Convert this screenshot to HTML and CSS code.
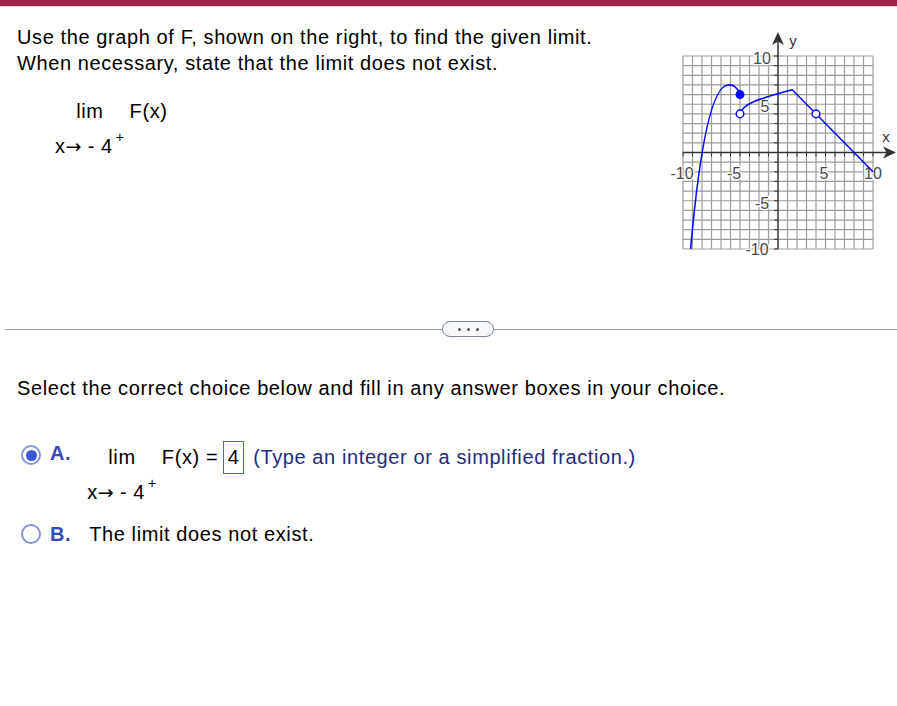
FILE: index.html
```html
<!DOCTYPE html>
<html lang="en">
<head>
    <meta charset="UTF-8">
    <title>Limit from a graph</title>
    <link rel="stylesheet" href="styles.css">
</head>
<body>
    <div class="topbar"></div>

    <div class="question">
        <div class="question-text">
            <p class="line">Use the graph of F, shown on the right, to find the given limit.<br>When necessary, state that the limit does not exist.</p>
            <div class="limit first">
                <div class="stack">
                    <span class="lim">lim</span>
                    <span class="sub">x<span class="to">→</span> - 4<sup>+</sup></span>
                </div>
                <span class="fx">F(x)</span>
            </div>
        </div>

        <svg class="graph" width="230" height="230" viewBox="0 0 230 230">
            <!-- grid -->
            <path class="grid" d="M16 28V221M25.5 28V221M35 28V221M44.5 28V221M54 28V221M63.5 28V221M73 28V221M82.5 28V221M92 28V221M101.5 28V221M120.5 28V221M130 28V221M139.5 28V221M149 28V221M158.5 28V221M168 28V221M177.5 28V221M187 28V221M196.5 28V221M206 28V221
                M16 28H206M16 37.65H206M16 47.3H206M16 56.95H206M16 66.6H206M16 76.25H206M16 85.9H206M16 95.55H206M16 105.2H206M16 114.85H206M16 134.15H206M16 143.8H206M16 153.45H206M16 163.1H206M16 172.75H206M16 182.4H206M16 192.05H206M16 201.7H206M16 211.35H206M16 221H206"/>
            <!-- axes -->
            <path class="axis" d="M111 221V12M16 124.5H221"/>
            <path class="ticks" d="M107 28H111M107 37.65H111M107 47.3H111M107 56.95H111M107 66.6H111M107 76.25H111M107 85.9H111M107 95.55H111M107 105.2H111M107 114.85H111M107 134.15H111M107 143.8H111M107 153.45H111M107 163.1H111M107 172.75H111M107 182.4H111M107 192.05H111M107 201.7H111M107 211.35H111M107 221H111
                M16 124.5V128.5M25.5 124.5V128.5M35 124.5V128.5M44.5 124.5V128.5M54 124.5V128.5M63.5 124.5V128.5M73 124.5V128.5M82.5 124.5V128.5M92 124.5V128.5M101.5 124.5V128.5M120.5 124.5V128.5M130 124.5V128.5M139.5 124.5V128.5M149 124.5V128.5M158.5 124.5V128.5M168 124.5V128.5M177.5 124.5V128.5M187 124.5V128.5M196.5 124.5V128.5M206 124.5V128.5"/>
            <path class="arrow" d="M111 4L117 17L111 13.5L105 17Z"/>
            <path class="arrow" d="M229 124.5L216 118.5L219.5 124.5L216 130.5Z"/>
            <text class="axis-name" x="126" y="12">y</text>
            <text class="axis-name" x="219" y="108">x</text>
            <!-- tick labels -->
            <text class="tick-label" x="95" y="30">10</text>
            <text class="tick-label" x="98" y="78">5</text>
            <text class="tick-label" x="95" y="175">-5</text>
            <text class="tick-label" x="90" y="221">-10</text>
            <text class="tick-label" x="15" y="145">-10</text>
            <text class="tick-label" x="67" y="145">-5</text>
            <text class="tick-label" x="157" y="145">5</text>
            <text class="tick-label" x="206" y="145">10</text>
            <!-- F -->
            <path class="curve" d="M23.6 221C33 115 45 58 61 57C66 56 71 60 73 66.6"/>
            <path class="curve" d="M73 85.9C76 76 90 71 125.25 61.8L206 143.8"/>
            <circle class="dot" cx="73" cy="66.6" r="4.5"/>
            <circle class="hole" cx="73" cy="85.9" r="3.8"/>
            <circle class="hole" cx="149" cy="85.9" r="3.8"/>
        </svg>
    </div>

    <div class="divider">
        <span class="rule left"></span>
        <span class="more"><i></i><i></i><i></i></span>
        <span class="rule right"></span>
    </div>

    <p class="line prompt">Select the correct choice below and fill in any answer boxes in your choice.</p>

    <div class="choice choice-a">
        <span class="radio checked"></span>
        <span class="letter">A.</span>
        <div class="limit">
            <div class="stack">
                <span class="lim tall">lim</span>
                <span class="sub">x<span class="to">→</span> - 4<sup>+</sup></span>
            </div>
            <span class="fx tall">F(x) =</span>
            <span class="answer">4</span>
            <span class="hint tall">(Type an integer or a simplified fraction.)</span>
        </div>
    </div>

    <div class="choice choice-b">
        <span class="radio"></span>
        <span class="letter">B.</span>
        <span class="line">The limit does not exist.</span>
    </div>
</body>
</html>
```

FILE: styles.css
```css
body {
    margin: 0;
    font-family: "Liberation Sans", Arial, sans-serif;
    font-size: 20px;
    letter-spacing: 0.6px;
    color: #000;
    background: #fff;
}
.topbar {
    height: 6px;
    background: #a3244b;
    border-bottom: 1px solid #e2d3d8;
}
.question {
    display: flex;
    padding-left: 17px;
}
.line {
    margin: 0;
    line-height: 26px;
}
.question-text .line {
    margin-top: 17px;
}
.limit {
    display: flex;
    align-items: flex-start;
}
.limit.first {
    margin: 22px 0 0 38px;
}
.stack {
    display: flex;
    flex-direction: column;
    align-items: center;
}
.lim, .fx {
    line-height: 26px;
}
.sub {
    margin-top: 9px;
    line-height: 26px;
}
.to {
    font-family: "DejaVu Sans", sans-serif;
    font-size: 19px;
    letter-spacing: 0;
}
sup {
    font-size: 14px;
    vertical-align: 0;
    position: relative;
    top: -11px;
    margin-left: 3px;
}
.fx {
    margin-left: 5px;
}
.graph {
    margin: 21px 0 0 auto;
    letter-spacing: 0;
}
.grid {
    fill: none;
    stroke: #9c9c9c;
    stroke-width: 1.2;
}
.axis, .ticks {
    fill: none;
    stroke: #333;
    stroke-width: 1.5;
}
.ticks {
    stroke-width: 1;
}
.arrow {
    fill: #333;
}
.axis-name {
    font-size: 15px;
    fill: #333;
    text-anchor: middle;
    dominant-baseline: central;
}
.tick-label {
    font-size: 16px;
    fill: #4a4a4a;
    stroke: #fff;
    stroke-width: 2.5px;
    paint-order: stroke;
    text-anchor: middle;
    dominant-baseline: central;
}
.curve {
    fill: none;
    stroke: #0a0aff;
    stroke-width: 1.6;
}
.dot {
    fill: #0a0aff;
}
.hole {
    fill: #fff;
    stroke: #0a0aff;
    stroke-width: 1.5;
}
.divider {
    display: flex;
    align-items: center;
    margin-top: 63px;
    padding-left: 5px;
}
.rule {
    height: 1px;
    background: #9aa0a6;
}
.rule.left {
    width: 437px;
}
.rule.right {
    flex: 1;
}
.more {
    display: flex;
    align-items: center;
    justify-content: center;
    gap: 6px;
    width: 50px;
    height: 14px;
    border: 1px solid #7b8591;
    border-radius: 8px;
    background: #f7f8fa;
}
.more i {
    width: 3px;
    height: 3px;
    border-radius: 50%;
    background: #555;
}
.prompt {
    margin-top: 38px;
    padding-left: 17px;
}
.choice {
    display: flex;
    align-items: flex-start;
    padding-left: 21px;
}
.choice-a {
    margin-top: 40px;
}
.choice-b {
    margin-top: 14px;
    align-items: center;
}
.radio {
    box-sizing: border-box;
    display: flex;
    align-items: center;
    justify-content: center;
    width: 20px;
    height: 20px;
    border: 2px solid #8595dd;
    border-radius: 50%;
}
.choice-a .radio {
    margin-top: 4px;
}
.radio.checked::after {
    content: "";
    width: 11px;
    height: 11px;
    border-radius: 50%;
    background: #3c55d8;
}
.letter {
    margin-left: 9px;
    font-weight: bold;
    color: #3a48b8;
    line-height: 26px;
}
.choice-a .letter {
    margin-top: -1px;
}
.choice-a .limit {
    margin-left: 16px;
}
.choice-b .letter {
    margin-right: 18px;
}
.tall {
    line-height: 33px;
}
.choice-a .sub {
    margin-top: 5px;
}
.answer {
    box-sizing: border-box;
    width: 21px;
    height: 33px;
    margin-left: 5px;
    border: 1px solid #4a66c9;
    line-height: 31px;
    text-align: center;
}
.hint {
    margin-left: 9px;
    color: #1f2c80;
}
```
